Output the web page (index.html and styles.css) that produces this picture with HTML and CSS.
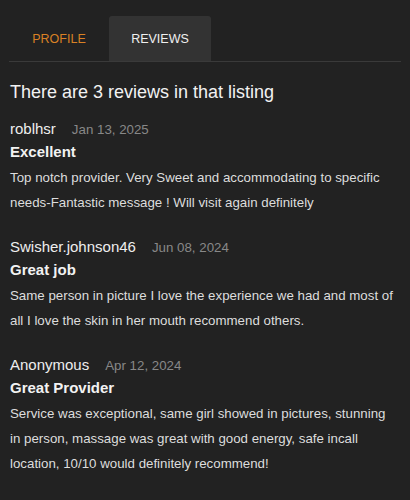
FILE: index.html
```html
<!DOCTYPE html>
<html>
<head>
<meta charset="utf-8">
<link rel="stylesheet" href="styles.css">
</head>
<body>
<div class="page">
  <div class="tabs">
    <div class="tab tab-profile">PROFILE</div>
    <div class="tab tab-active">REVIEWS</div>
  </div>
  <h2 class="heading">There are 3 reviews in that listing</h2>
  <div class="review">
    <div class="meta"><span class="name">roblhsr</span><span class="date">Jan 13, 2025</span></div>
    <div class="title">Excellent</div>
    <p class="body">Top notch provider. Very Sweet and accommodating to specific needs-Fantastic message ! Will visit again definitely</p>
  </div>
  <div class="review">
    <div class="meta"><span class="name">Swisher.johnson46</span><span class="date">Jun 08, 2024</span></div>
    <div class="title">Great job</div>
    <p class="body">Same person in picture I love the experience we had and most of all I love the skin in her mouth recommend others.</p>
  </div>
  <div class="review">
    <div class="meta"><span class="name">Anonymous</span><span class="date">Apr 12, 2024</span></div>
    <div class="title">Great Provider</div>
    <p class="body">Service was exceptional, same girl showed in pictures, stunning in person, massage was great with good energy, safe incall location, 10/10 would definitely recommend!</p>
  </div>
</div>
</body>
</html>
```
FILE: styles.css
```css
html, body {
  margin: 0;
  padding: 0;
  background: #222222;
}
body {
  font-family: "Liberation Sans", Arial, sans-serif;
  color: #e6e6e6;
}
.page {
  padding: 16px 10px 0 10px;
}
.tabs {
  display: flex;
  border-bottom: 1px solid #3a3a3a;
  margin: 0 -1px;
}
.tab {
  height: 45px;
  display: flex;
  align-items: center;
  justify-content: center;
  font-size: 12.5px;
  width: 100px;
  border-radius: 3px 3px 0 0;
}
.tab-profile {
  color: #d98125;
}
.tab-active {
  background: #333333;
  color: #f0f0f0;
  width: 102px;
}
.heading {
  margin: 19px 0 0 0;
  font-size: 18px;
  font-weight: normal;
  line-height: 22px;
  color: #f2f2f2;
}
.review {
  margin-top: 16px;
  padding-right: 4px;
}
.review + .review {
  margin-top: 22px;
}
.meta {
  display: flex;
  align-items: baseline;
  gap: 16px;
  line-height: 20px;
}
.name {
  font-size: 15px;
  color: #eeeeee;
}
.date {
  font-size: 13.3px;
  color: #888888;
}
.title {
  font-size: 15px;
  font-weight: bold;
  line-height: 23px;
  color: #f2f2f2;
}
.body {
  margin: 2px 0 0 0;
  font-size: 13.3px;
  line-height: 25px;
  color: #dddddd;
}
```
